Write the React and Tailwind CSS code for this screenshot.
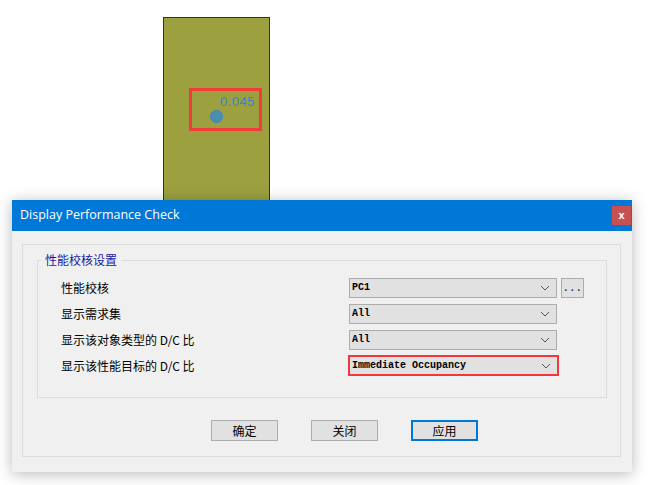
import React from 'react';

const cjk = { fontFamily: '"Noto Sans CJK SC", "Liberation Sans", sans-serif' };
const mono = { fontFamily: '"Liberation Mono", "Noto Sans CJK SC", monospace' };

const Chevron = () => (
    <svg width="10" height="6" viewBox="0 0 10 6" className="shrink-0">
        <path d="M1 1 L5 5 L9 1" fill="none" stroke="#555" strokeWidth="1" />
    </svg>
);

const Combo = ({ value, highlight }) => (
    <div
        className={`flex items-center justify-between bg-[#e1e1e1] pr-[6px] ${highlight
            ? 'w-[211px] h-[21px] border-2 border-[#f0383a] pl-[2px]'
            : 'w-[208px] h-[20px] border border-[#adadad] pl-[2px]'}`}
    >
        <span className="text-[10px] font-bold leading-none text-black" style={mono}>{value}</span>
        <Chevron />
    </div>
);

const Row = ({ label, children, first }) => (
    <div className={`flex items-center ${first ? '' : 'mt-[6px]'}`}>
        <div className="w-[288px] text-[12px] text-black" style={cjk}>{label}</div>
        {children}
    </div>
);

const Button = ({ children, primary }) => (
    <button
        className={`w-[67px] h-[21px] flex items-center justify-center bg-[#e1e1e1] text-[12px] text-black ${primary ? 'border-2 border-[#0078d7]' : 'border border-[#adadad]'}`}
        style={cjk}
    >
        {children}
    </button>
);

export default function App() {
    return (
        <div className="w-[649px] h-[485px] bg-white overflow-hidden">

            {/* model canvas */}
            <div className="relative ml-[163px] mt-[17px] w-[107px] h-[190px] -mb-[7px] bg-[#9ca03f] border border-[#1f2a8f] border-b-0">
                <div className="absolute left-[25px] top-[70px] w-[73px] h-[43px] border-[3px] border-[#f23b3b]" />
                <span
                    className="absolute left-[56px] top-[77px] text-[13px] leading-none text-[#2f86d6] tracking-[0.5px]"
                    style={{ fontFamily: '"Liberation Sans", sans-serif' }}
                >
                    0.045
                </span>
                <div className="absolute left-[46px] top-[92px] w-[13px] h-[13px] rounded-full bg-[#4b8fae] border border-[#3a82cf]" />
            </div>

            {/* dialog */}
            <div className="relative ml-[12px] w-[620px] h-[272px] bg-[#f0f0f0] shadow-[0_2px_14px_rgba(0,0,0,0.28)] flex flex-col">
                <div className="h-[31px] bg-[#0078d7] flex items-center justify-between pl-[8px] pr-[1px]">
                    <span className="text-[12.5px] text-white" style={{ fontFamily: '"Open Sans", "Liberation Sans", sans-serif' }}>
                        Display Performance Check
                    </span>
                    <div className="w-[19px] h-[19px] bg-[#c75050] flex items-center justify-center text-white text-[11px] font-bold leading-none" style={{ fontFamily: '"Liberation Sans", sans-serif' }}>
                        x
                    </div>
                </div>

                <div className="flex-1 pt-[13px] pl-[10px] pr-[11px] pb-[15px]">
                    <div className="h-full border border-[#dcdcdc] pl-[14px] pr-[13px] pt-[6px]">
                        <fieldset className="border border-[#dcdcdc] pl-[23px] pb-[20px] pt-[9px] h-[147px]">
                            <legend className="-ml-[20px] px-[4px] text-[12px] text-[#1a1aa0] leading-[18px]" style={cjk}>
                                性能校核设置
                            </legend>
                            <Row label="性能校核" first>
                                <Combo value="PC1" />
                                <div className="ml-[4px] w-[23px] h-[20px] border border-[#adadad] bg-[#e1e1e1] flex items-end justify-center pb-[3px]">
                                    <span className="text-[10px] font-bold leading-none text-[#1a1a60] tracking-[0.5px]" style={mono}>...</span>
                                </div>
                            </Row>
                            <Row label="显示需求集">
                                <Combo value="All" />
                            </Row>
                            <Row label="显示该对象类型的 D/C 比">
                                <Combo value="All" />
                            </Row>
                            <div className="flex items-center mt-[5px]">
                                <div className="w-[287px] text-[12px] text-black" style={cjk}>显示该性能目标的 D/C 比</div>
                                <Combo value="Immediate Occupancy" highlight />
                            </div>
                        </fieldset>

                        <div className="flex gap-[33px] ml-[174px] mt-[22px]">
                            <Button>确定</Button>
                            <Button>关闭</Button>
                            <Button primary>应用</Button>
                        </div>
                    </div>
                </div>
            </div>
        </div>
    );
}
